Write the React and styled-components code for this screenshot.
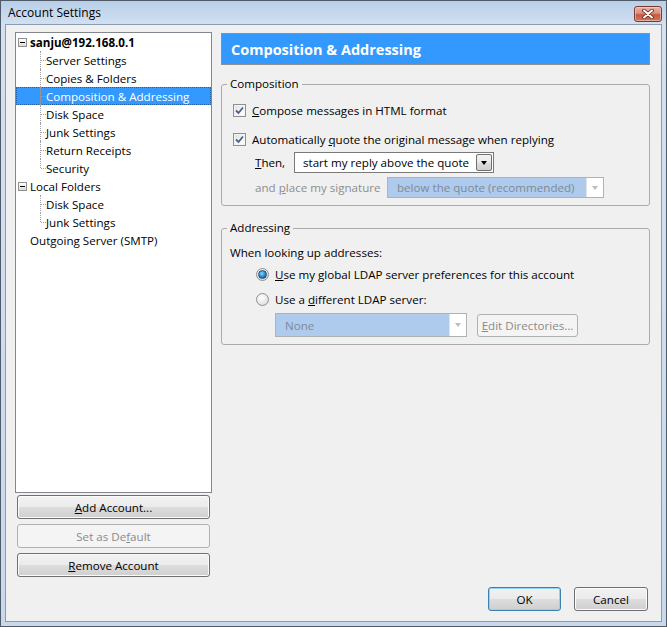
import React from "react";
import styled, { createGlobalStyle, css } from "styled-components";

const uiFont = `"Open Sans", "Noto Sans", "Liberation Sans", sans-serif`;
const uiSize = "11.6px";

const GlobalStyle = createGlobalStyle`
  html, body {
    margin: 0;
    padding: 0;
    background: #ffffff;
  }
  body {
    font-family: ${uiFont};
    font-size: ${uiSize};
    color: #000;
  }
  * {
    box-sizing: border-box;
  }
`;

const Window = styled.div`
  width: 667px;
  height: 627px;
  display: flex;
  flex-direction: column;
  border: 1px solid #4f5b68;
  padding: 0 4px 4px 4px;
  background: linear-gradient(to bottom, #b8cee8 0px, #d3e1f1 24px, #c8d9ee 100%);
`;

const TitleBar = styled.div`
  height: 23px;
  display: flex;
  align-items: center;
  justify-content: space-between;
  padding-left: 3px;
`;

const Title = styled.span`
  font-size: 12px;
  color: #000;
  line-height: 16px;
`;

const CloseButton = styled.div`
  width: 28px;
  height: 16px;
  margin-top: 2px;
  border: 1px solid #7a3a2c;
  border-radius: 3px;
  display: flex;
  align-items: center;
  justify-content: center;
  background: linear-gradient(to bottom, #e8b3a6 0%, #d78f7e 45%, #c45a41 55%, #d2765d 100%);
  box-shadow: inset 0 0 0 1px rgba(255, 220, 210, 0.5);
`;

const Client = styled.div`
  flex: 1;
  display: flex;
  flex-direction: column;
  background: #f0f0f0;
  border: 1px solid #8c9cb0;
  padding: 7px 11px 10px 9px;
`;

const Body = styled.div`
  display: flex;
  gap: 9px;
`;

const LeftColumn = styled.div`
  width: 197px;
  display: flex;
  flex-direction: column;
`;

const Tree = styled.div`
  height: 461px;
  background: #fff;
  border: 1px solid #828790;
`;

const TreeRow = styled.div`
  height: 18px;
  display: flex;
  align-items: center;
  padding-left: ${({ $indent }) => $indent}px;
  font-weight: ${({ $bold }) => ($bold ? 700 : 400)};
  white-space: nowrap;
  ${({ $selected }) =>
    $selected &&
    css`
      background: #3399ff;
      color: #fff;
      outline: 1px dotted #1c5fa8;
      outline-offset: -1px;
    `}
`;

const Expander = styled.span`
  width: 9px;
  height: 9px;
  margin-right: 3px;
  border: 1px solid #919191;
  background: linear-gradient(to bottom, #ffffff, #dcdcdc);
  display: flex;
  align-items: center;
  justify-content: center;
  &::after {
    content: "";
    width: 5px;
    height: 1px;
    background: #000;
  }
`;

const Connector = styled.span`
  position: relative;
  width: 6px;
  height: 18px;
  &::before {
    content: "";
    position: absolute;
    left: 0;
    top: 0;
    height: ${({ $last }) => ($last ? "9px" : "18px")};
    border-left: 1px dotted #a0a0a0;
  }
  &::after {
    content: "";
    position: absolute;
    left: 1px;
    top: 9px;
    width: 5px;
    border-top: 1px dotted #a0a0a0;
  }
`;

const Button = styled.button`
  font-family: ${uiFont};
  font-size: ${uiSize};
  height: ${({ $h }) => $h || 24}px;
  padding: 0;
  width: ${({ $width }) => ($width ? `${$width}px` : "auto")};
  color: #000;
  border: 1px solid #707070;
  border-radius: 3px;
  background: linear-gradient(to bottom, #f2f2f2 0%, #ebebeb 48%, #dddddd 52%, #cfcfcf 100%);
  box-shadow: inset 0 0 0 1px #fbfbfb;
  ${({ disabled }) =>
    disabled &&
    css`
      color: #8a8a8a;
      border-color: #adb2b5;
      background: #f4f4f4;
      box-shadow: none;
    `}
  ${({ $default }) =>
    $default &&
    css`
      border-color: #3c7fb1;
      box-shadow: inset 0 0 0 1px #8fd4f5;
    `}
`;

const SideButton = styled(Button)`
  margin: ${({ $first }) => ($first ? "2px" : "5px")} 2px 0 2px;
`;

const RightColumn = styled.div`
  width: 429px;
  display: flex;
  flex-direction: column;
`;

const PageHeader = styled.div`
  height: 32px;
  margin-top: 1px;
  border: 1px solid #8e8f8f;
  background: #3399ff;
  color: #fff;
  font-weight: 700;
  font-size: 14.5px;
  display: flex;
  align-items: center;
  padding-left: 9px;
`;

const GroupBox = styled.fieldset`
  margin: ${({ $top }) => $top}px 0 0 0;
  padding: 8px 8px 7px 8px;
  border: 1px solid #ababab;
  border-radius: 3px;
  min-width: 0;
`;

const Legend = styled.legend`
  padding: 0 3px;
  margin-left: -3px;
  line-height: 16px;
  font-size: ${uiSize};
`;

const Row = styled.div`
  display: flex;
  align-items: center;
  height: ${({ $h }) => $h || 20}px;
  margin-top: ${({ $top }) => $top || 0}px;
  margin-left: ${({ $indent }) => $indent || 0}px;
  gap: ${({ $gap }) => ($gap === undefined ? 6 : $gap)}px;
  white-space: nowrap;
`;

const Label = styled.span`
  width: ${({ $width }) => ($width ? `${$width}px` : "auto")};
  color: ${({ $disabled }) => ($disabled ? "#8d8d8d" : "#000")};
  flex-shrink: 0;
`;

const Key = styled.span`
  text-decoration: underline;
`;

const Box = styled.span`
  width: 13px;
  height: 13px;
  flex-shrink: 0;
  border: 1px solid #8e8f8f;
  background: linear-gradient(135deg, #dcdcdc 0%, #f7f7f7 60%, #ffffff 100%);
  box-shadow: inset 0 0 0 1px #f4f4f4;
  display: flex;
  align-items: center;
  justify-content: center;
`;

const Radio = styled.span`
  width: 13px;
  height: 13px;
  flex-shrink: 0;
  border-radius: 50%;
  border: 1px solid #8e8f8f;
  background: radial-gradient(circle at 40% 35%, #ffffff 0%, #e6e6e6 60%, #d0d0d0 100%);
  display: flex;
  align-items: center;
  justify-content: center;
  ${({ $checked }) =>
    $checked &&
    css`
      &::after {
        content: "";
        width: 7px;
        height: 7px;
        border-radius: 50%;
        border: 1px solid #194d7b;
        background: radial-gradient(circle at 40% 35%, #8fd3ff 0%, #2a86c9 55%, #0c4a86 100%);
      }
    `}
`;

const Select = styled.div`
  width: ${({ $width }) => $width}px;
  height: ${({ $h }) => $h || 21}px;
  flex-shrink: 0;
  display: flex;
  align-items: center;
  border: 1px solid ${({ $disabled }) => ($disabled ? "#adb2b5" : "#7a7a7a")};
  background: ${({ $disabled }) => ($disabled ? "#aecaec" : "#ffffff")};
  color: ${({ $disabled }) => ($disabled ? "#7f8a96" : "#000")};
  padding: 1px;
`;

const SelectText = styled.span`
  flex: 1;
  padding-left: ${({ $pad }) => $pad || 7}px;
  overflow: hidden;
`;

const DropButton = styled.span`
  width: 16px;
  align-self: stretch;
  display: flex;
  align-items: center;
  justify-content: center;
  ${({ $disabled }) =>
    $disabled
      ? css`
          background: #ffffff;
          border-left: 1px solid #e3e3e3;
          margin: -1px -1px -1px 0;
          width: 17px;
        `
      : css`
          border: 1px solid #707070;
          border-radius: 2px;
          background: linear-gradient(to bottom, #f2f2f2 0%, #ebebeb 48%, #dddddd 52%, #cfcfcf 100%);
        `}
  &::after {
    content: "";
    border-left: 3.5px solid transparent;
    border-right: 3.5px solid transparent;
    border-top: 4px solid ${({ $disabled }) => ($disabled ? "#bcbcbc" : "#000")};
  }
`;

const Footer = styled.div`
  margin-top: auto;
  display: flex;
  justify-content: flex-end;
  gap: 13px;
  padding-right: 2px;
`;

function CheckMark() {
  return (
    <svg width="9" height="9" viewBox="0 0 9 9">
      <path d="M1 4.5 L3.5 7 L8 1.5" fill="none" stroke="#4a5f8e" strokeWidth="1.8" />
    </svg>
  );
}

function CloseGlyph() {
  return (
    <svg width="12" height="10" viewBox="0 0 12 10">
      <path d="M2 1.5 L10 8.5 M10 1.5 L2 8.5" stroke="#5a2018" strokeWidth="3.6" strokeLinecap="round" />
      <path d="M2 1.5 L10 8.5 M10 1.5 L2 8.5" stroke="#ffffff" strokeWidth="2" strokeLinecap="round" />
    </svg>
  );
}

const tree = [
  { label: "sanju@192.168.0.1", type: "root", bold: true },
  { label: "Server Settings", type: "child" },
  { label: "Copies & Folders", type: "child" },
  { label: "Composition & Addressing", type: "child", selected: true },
  { label: "Disk Space", type: "child" },
  { label: "Junk Settings", type: "child" },
  { label: "Return Receipts", type: "child" },
  { label: "Security", type: "child", last: true },
  { label: "Local Folders", type: "root" },
  { label: "Disk Space", type: "child" },
  { label: "Junk Settings", type: "child", last: true },
  { label: "Outgoing Server (SMTP)", type: "leaf" },
];

function AccountTree() {
  return (
    <Tree>
      {tree.map((item, i) => {
        const indent = item.type === "root" ? 2 : item.type === "child" ? 24 : 14;
        return (
          <TreeRow key={i} $indent={indent} $bold={item.bold} $selected={item.selected}>
            {item.type === "root" && <Expander />}
            {item.type === "child" && <Connector $last={item.last} />}
            <span>{item.label}</span>
          </TreeRow>
        );
      })}
    </Tree>
  );
}

export default function App() {
  return (
    <>
      <GlobalStyle />
      <Window>
        <TitleBar>
          <Title>Account Settings</Title>
          <CloseButton>
            <CloseGlyph />
          </CloseButton>
        </TitleBar>
        <Client>
          <Body>
            <LeftColumn>
              <AccountTree />
              <SideButton $first>
                <Key>A</Key>dd Account...
              </SideButton>
              <SideButton disabled>
                Set as De<Key>f</Key>ault
              </SideButton>
              <SideButton>
                <Key>R</Key>emove Account
              </SideButton>
            </LeftColumn>

            <RightColumn>
              <PageHeader>Composition &amp; Addressing</PageHeader>

              <GroupBox $top={11}>
                <Legend>Composition</Legend>
                <Row $indent={3}>
                  <Box>
                    <CheckMark />
                  </Box>
                  <Label>
                    <Key>C</Key>ompose messages in HTML format
                  </Label>
                </Row>
                <Row $indent={3} $top={9}>
                  <Box>
                    <CheckMark />
                  </Box>
                  <Label>
                    Automatically <Key>q</Key>uote the original message when replying
                  </Label>
                </Row>
                <Row $indent={25} $top={3} $h={21} $gap={0}>
                  <Label $width={39}>
                    <Key>T</Key>hen,
                  </Label>
                  <Select $width={200}>
                    <SelectText>start my reply above the quote</SelectText>
                    <DropButton />
                  </Select>
                </Row>
                <Row $indent={25} $top={4} $h={21} $gap={0}>
                  <Label $width={132} $disabled>
                    and <Key>p</Key>lace my signature
                  </Label>
                  <Select $width={217} $disabled>
                    <SelectText $pad={8}>below the quote (recommended)</SelectText>
                    <DropButton $disabled />
                  </Select>
                </Row>
              </GroupBox>

              <GroupBox $top={14}>
                <Legend>Addressing</Legend>
                <Row $h={16}>
                  <Label>When looking up addresses:</Label>
                </Row>
                <Row $indent={26} $top={4}>
                  <Radio $checked />
                  <Label>
                    <Key>U</Key>se my global LDAP server preferences for this account
                  </Label>
                </Row>
                <Row $indent={26} $top={5}>
                  <Radio />
                  <Label>
                    Use a <Key>d</Key>ifferent LDAP server:
                  </Label>
                </Row>
                <Row $indent={45} $top={4} $h={24} $gap={10}>
                  <Select $width={192} $h={24} $disabled>
                    <SelectText $pad={8}>None</SelectText>
                    <DropButton $disabled />
                  </Select>
                  <Button $width={101} $h={23} disabled>
                    <Key>E</Key>dit Directories...
                  </Button>
                </Row>
              </GroupBox>
            </RightColumn>
          </Body>

          <Footer>
            <Button $width={73} $default>
              OK
            </Button>
            <Button $width={74}>Cancel</Button>
          </Footer>
        </Client>
      </Window>
    </>
  );
}
